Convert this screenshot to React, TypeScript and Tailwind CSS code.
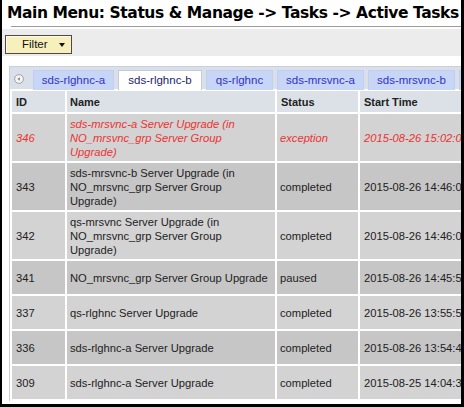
import React from "react";

type Task = {
  id: string;
  name: string[];
  status: string;
  start: string;
  error?: boolean;
};

const TASKS: Task[] = [
  {
    id: "346",
    name: ["sds-mrsvnc-a Server Upgrade (in", "NO_mrsvnc_grp Server Group", "Upgrade)"],
    status: "exception",
    start: "2015-08-26 15:02:04",
    error: true,
  },
  {
    id: "343",
    name: ["sds-mrsvnc-b Server Upgrade (in", "NO_mrsvnc_grp Server Group", "Upgrade)"],
    status: "completed",
    start: "2015-08-26 14:46:03",
  },
  {
    id: "342",
    name: ["qs-mrsvnc Server Upgrade (in", "NO_mrsvnc_grp Server Group", "Upgrade)"],
    status: "completed",
    start: "2015-08-26 14:46:03",
  },
  { id: "341", name: ["NO_mrsvnc_grp Server Group Upgrade"], status: "paused", start: "2015-08-26 14:45:55" },
  { id: "337", name: ["qs-rlghnc Server Upgrade"], status: "completed", start: "2015-08-26 13:55:59" },
  { id: "336", name: ["sds-rlghnc-a Server Upgrade"], status: "completed", start: "2015-08-26 13:54:46" },
  { id: "309", name: ["sds-rlghnc-a Server Upgrade"], status: "completed", start: "2015-08-25 14:04:30" },
];

// server tabs; widths read off the screen
const TABS = [
  { label: "sds-rlghnc-a", w: "w-[81px]" },
  { label: "sds-rlghnc-b", w: "w-[84px]", active: true },
  { label: "qs-rlghnc", w: "w-[67px]" },
  { label: "sds-mrsvnc-a", w: "w-[87px]" },
  { label: "sds-mrsvnc-b", w: "w-[87px]" },
  { label: "", w: "w-[60px]" },
];

function ScrollLeft() {
  return (
    <svg width="10" height="10" viewBox="0 0 10 10" className="shrink-0">
      <circle cx="5" cy="5" r="4.4" fill="#f4f4f4" stroke="#9a9a9a" strokeWidth="0.9" />
      <path d="M3.3 5 L5.9 3.2 L5.9 6.8 Z" fill="#8a8a8a" />
    </svg>
  );
}

export default function App() {
  return (
    <div className="w-[464px] h-[407px] overflow-hidden bg-white border-l-2 border-r-[3px] border-b-[3px] border-black font-['Liberation_Sans',Arial,sans-serif] text-[#222]">
      {/* page title */}
      <h1 className="pl-[5px] pt-[3px] h-[26px] whitespace-nowrap font-['DejaVu_Sans',Verdana,sans-serif] font-bold text-[15.5px] leading-[20px] tracking-[-0.42px] text-black">
        Main Menu: Status &amp; Manage -&gt; Tasks -&gt; Active Tasks
      </h1>
      <div className="ml-[9px] h-px bg-[#9c9c9c]" />
      <div className="h-[2px]" />

      {/* toolbar */}
      <div className="h-[27px] bg-[#ececec] pl-[3px] pt-[6px]">
        <button className="flex h-[19px] w-[67px] items-center border border-[#4a4a4a] bg-[#f8f0bc] pl-[16px] text-[11.5px] text-[#111] shadow-[inset_1px_1px_0_#fffbe0]">
          <span>Filter</span>
          <span className="ml-auto mr-[6px] h-0 w-0 border-x-[3.5px] border-t-[4px] border-x-transparent border-t-[#111]" />
        </button>
      </div>

      <div className="h-[10px]" />

      {/* tab container */}
      <div className="ml-[7px] overflow-hidden border-l border-t border-[#c9d0db]">
        <div className="flex h-[23px] items-end bg-[#d9e0ea] pt-[3px]">
          <div className="mb-[6px] ml-[4px] mr-[9px] flex">
            <ScrollLeft />
          </div>
          <div className="flex gap-[4px]">
            {TABS.map((t, i) => (
              <div
                key={i}
                className={`${t.w} h-[20px] shrink-0 text-center text-[11.5px] leading-[19px] border border-b-0 ${
                  t.active
                    ? "bg-white border-[#c4ccd8] text-[#1d1d6b]"
                    : "bg-[#c7d5f6] border-[#c3cfec] text-[#3232c8]"
                }`}
              >
                {t.label}
              </div>
            ))}
          </div>
        </div>

        <table className="w-[482px] max-w-none table-fixed border-separate border-spacing-[2px] -mt-[1px] bg-white text-[11.2px] leading-[14px]">
          <colgroup>
            <col className="w-[53px]" />
            <col className="w-[208px]" />
            <col className="w-[81px]" />
            <col className="w-[130px]" />
          </colgroup>
          <thead>
            <tr className="h-[21px] bg-[#dbe1e7] text-left text-[11px] font-bold">
              <th className="pl-[4px] font-bold">ID</th>
              <th className="pl-[3px] font-bold">Name</th>
              <th className="pl-[4px] font-bold">Status</th>
              <th className="pl-[4px] font-bold whitespace-nowrap">Start Time</th>
            </tr>
          </thead>
          <tbody>
            {TASKS.map((t, i) => (
              <tr
                key={t.id}
                className={`${t.name.length > 1 ? "h-[47px]" : "h-[33px]"} ${
                  i % 2 === 0 ? "bg-[#d3d3d3]" : "bg-[#c6c6c6]"
                } ${t.error ? "italic text-[#ec3232]" : ""}`}
              >
                <td className="pl-[4px] align-middle">{t.id}</td>
                <td className="pl-[3px] align-middle whitespace-nowrap">
                  {t.name.map((line, j) => (
                    <div key={j}>{line}</div>
                  ))}
                </td>
                <td className="pl-[3px] align-middle">{t.status}</td>
                <td className="pl-[4px] align-middle whitespace-nowrap overflow-hidden">{t.start}</td>
              </tr>
            ))}
          </tbody>
        </table>
      </div>
    </div>
  );
}
